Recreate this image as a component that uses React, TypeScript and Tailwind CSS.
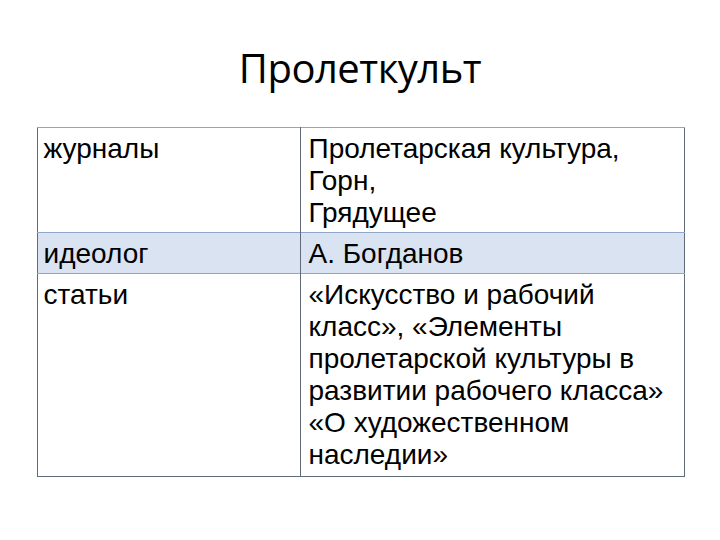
import React from "react";

const rows = [
  { label: "журналы", lines: ["Пролетарская культура,", "Горн,", "Грядущее"], shaded: false },
  { label: "идеолог", lines: ["А. Богданов"], shaded: true },
  {
    label: "статьи",
    lines: [
      "«Искусство и рабочий",
      "класс», «Элементы",
      "пролетарской культуры в",
      "развитии рабочего класса»",
      "«О художественном",
      "наследии»",
    ],
    shaded: false,
  },
];

export default function App() {
  return (
    <div className="w-[720px] h-[540px] bg-white flex flex-col items-center">
      <h1 className="mt-[44px] text-[40px] leading-[48px] text-black font-['Open_Sans',sans-serif] tracking-[-0.5px]">
        Пролеткульт
      </h1>
      <table className="mt-[35px] ml-[1px] w-[648px] border-collapse border border-[#5f6b78] font-['Liberation_Sans',Arial,sans-serif] text-[28px] leading-[32px] text-black">
        <tbody>
          {rows.map((r, i) => (
            <tr key={i} className={`${r.shaded ? "bg-[#d9e3f1]" : "bg-white"} border-t border-[#8ea7c8]`}>
              <td className="w-[263px] align-top pl-[6px] pt-[5px] pb-[3px] border-r border-[#5f6b78]">{r.label}</td>
              <td className={`align-top pl-[8px] pt-[5px] ${i === 2 ? "pb-[5px]" : "pb-[3px]"}`}>
                {r.lines.map((l, j) => (
                  <div key={j} className="whitespace-nowrap">{l}</div>
                ))}
              </td>
            </tr>
          ))}
        </tbody>
      </table>
    </div>
  );
}
